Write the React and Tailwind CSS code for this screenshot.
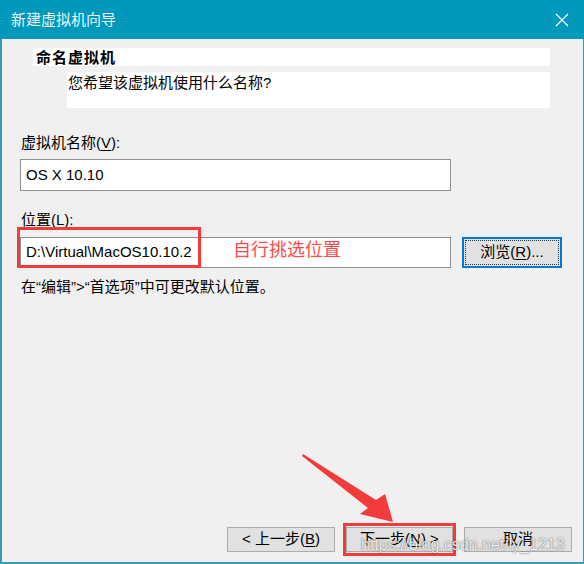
export default function App() {
  const font = { fontFamily: '"Liberation Sans", "Noto Sans CJK SC", sans-serif' };
  return (
    <div className="w-[584px] h-[564px] bg-[#f0f0f0] flex flex-col relative overflow-hidden text-[15px] text-black" style={font}>
      {/* title bar */}
      <div className="h-[39px] bg-[#0099bc] flex items-center justify-between pl-[11px] pr-[15px] shrink-0">
        <span className="text-white/95 text-[15px] leading-none">新建虚拟机向导</span>
        <svg width="14" height="14" viewBox="0 0 14 14" className="text-white">
          <path d="M1 1 L13 13 M13 1 L1 13" stroke="currentColor" strokeWidth="1.2" />
        </svg>
      </div>
      <div className="flex-1 flex flex-col border-l-2 border-b-2 border-r border-[#3a9bb8]">
        {/* header */}
        <div className="mt-[9px] ml-[31px] w-[517px] h-[18px] bg-white flex items-center">
          <span className="font-bold text-[15px] tracking-[1px] leading-none pl-[3px]">命名虚拟机</span>
        </div>
        <div className="mt-[6px] ml-[65px] w-[483px] h-[36px] bg-white">
          <div className="pl-[1px] pt-[1px] leading-[20px]">您希望该虚拟机使用什么名称?</div>
        </div>

        <div className="mt-[25px] ml-[19px] leading-[20px]">
          虚拟机名称(<span className="underline underline-offset-2">V</span>):
        </div>
        <div className="mt-[6px] ml-[18px] w-[431px] h-[32px] bg-white border border-[#8f8f8f] flex items-center pl-[5px]">
          OS X 10.10
        </div>

        <div className="mt-[19px] ml-[19px] leading-[20px]">
          位置(<span className="underline underline-offset-2">L</span>):
        </div>
        <div className="mt-[7px] ml-[18px] flex items-center">
          <div className="w-[431px] h-[31px] bg-white border border-[#8f8f8f] flex items-center pl-[5px]">
            D:\Virtual\MacOS10.10.2
          </div>
          <div className="ml-[11px] w-[100px] h-[31px] bg-[#e1e1e1] border-2 border-[#0078d7] p-[1px]">
            <div className="w-full h-full border border-dotted border-[#333] flex items-center justify-center pb-[1px]">
              浏览(<span className="underline underline-offset-2">R</span>)...
            </div>
          </div>
        </div>
        <div className="mt-[9px] ml-[19px] leading-[20px]">
          在“编辑”&gt;“首选项”中可更改默认位置。
        </div>

        {/* buttons */}
        <div className="mt-auto mb-[10px] flex items-center">
          <div className="ml-[225px] w-[108px] h-[25px] bg-[#e1e1e1] border border-[#adadad] flex items-center justify-center">
            &lt; 上一步(<span className="underline underline-offset-2">B</span>)
          </div>
          <div className="ml-[8px] py-[1px] border-[3px] border-[#f23b3b] -my-[4px]">
            <div className="w-[107px] h-[25px] bg-[#e1e1e1] border border-[#adadad] flex items-center justify-center">
              下一步(<span className="underline underline-offset-2">N</span>) &gt;
            </div>
          </div>
          <div className="ml-[8px] w-[108px] h-[25px] bg-[#e1e1e1] border border-[#adadad] flex items-center justify-center">
            取消
          </div>
        </div>
      </div>

      {/* annotations */}
      <div className="absolute left-[17px] top-[227px] w-[184px] h-[41px] border-[3px] border-[#f23b3b]" />
      <div className="absolute left-[233px] top-[238px] text-[18px] leading-[24px] text-[#ff4a4a]">自行挑选位置</div>
      <svg className="absolute left-0 top-0 pointer-events-none" width="584" height="564" viewBox="0 0 584 564">
        <polygon points="303,454 376,500 385,494 393,522 360,514 368,508 302,456" fill="#f23b3b" />
      </svg>
      <div className="absolute left-[361px] top-[534px] text-[16px] leading-[22px] text-white/90 pointer-events-none whitespace-nowrap" style={{ fontFamily: '"Liberation Sans", sans-serif', textShadow: '0 0 1px rgba(0,0,0,0.6), 0 0 2px rgba(0,0,0,0.3)' }}>
        https://blog.csdn.net/ly_1213
      </div>
    </div>
  );
}
